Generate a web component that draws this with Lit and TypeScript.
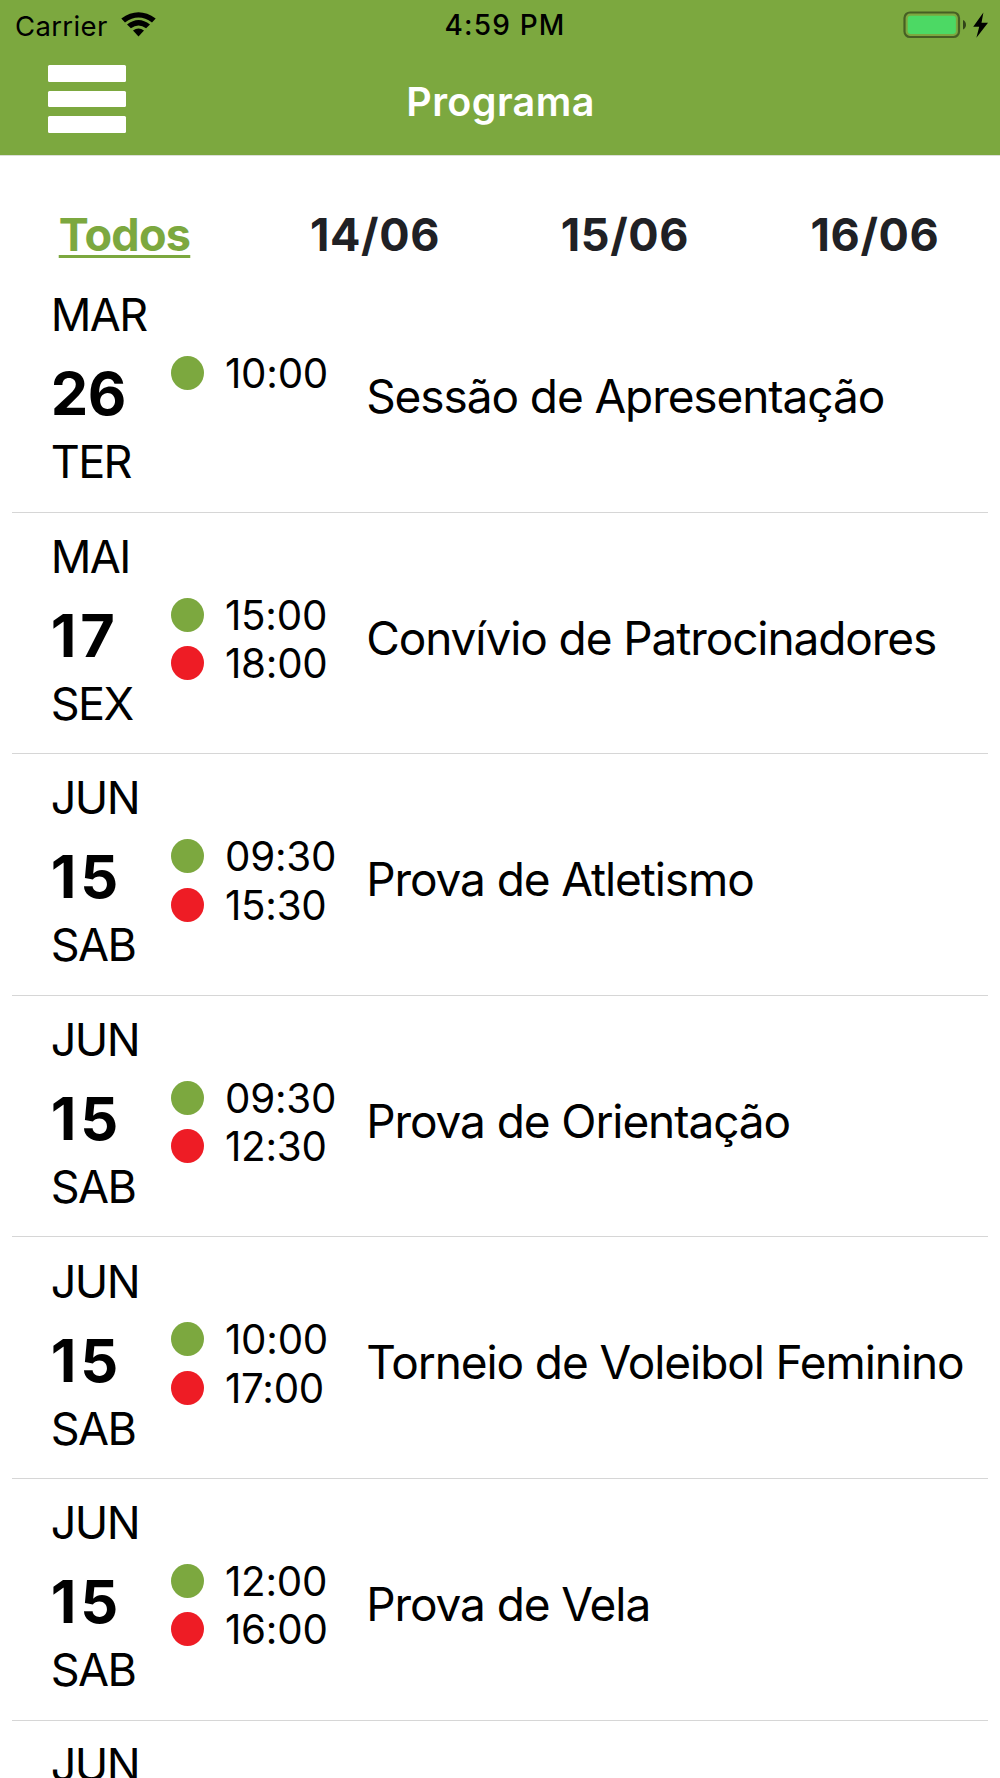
import { LitElement, html, css } from "lit";
import { customElement, property, state } from "lit/decorators.js";
import { classMap } from "lit/directives/class-map.js";

interface ProgramEvent {
  month: string;
  day: string;
  weekday: string;
  start: string;
  end?: string;
  title: string;
}

const TABS = ["Todos", "14/06", "15/06", "16/06"];

const EVENTS: ProgramEvent[] = [
  { month: "MAR", day: "26", weekday: "TER", start: "10:00", title: "Sessão de Apresentação" },
  { month: "MAI", day: "17", weekday: "SEX", start: "15:00", end: "18:00", title: "Convívio de Patrocinadores" },
  { month: "JUN", day: "15", weekday: "SAB", start: "09:30", end: "15:30", title: "Prova de Atletismo" },
  { month: "JUN", day: "15", weekday: "SAB", start: "09:30", end: "12:30", title: "Prova de Orientação" },
  { month: "JUN", day: "15", weekday: "SAB", start: "10:00", end: "17:00", title: "Torneio de Voleibol Feminino" },
  { month: "JUN", day: "15", weekday: "SAB", start: "12:00", end: "16:00", title: "Prova de Vela" },
  { month: "JUN", day: "", weekday: "", start: "", title: "" },
];

@customElement("status-bar")
class StatusBar extends LitElement {
  static styles = css`
    :host {
      display: grid;
      grid-template-columns: 1fr auto 1fr;
      align-items: center;
      height: 51px;
      padding: 0 12px 0 15px;
      box-sizing: border-box;
      color: #000;
    }
    .side { display: flex; align-items: center; height: 51px; }
    .end { justify-content: flex-end; }
    .carrier { font-size: 27.5px; letter-spacing: 0.35px; margin-right: 13px; }
    .clock { font-size: 28px; font-weight: 500; letter-spacing: 1.2px; padding-left: 7px; margin-bottom: 1px; }
    svg { display: block; }
    .wifi { margin-bottom: 3px; }
    .battery { margin-bottom: 2px; }
  `;
  render() {
    return html`
      <div class="side">
        <span class="carrier">Carrier</span>
        <svg class="wifi" width="35" height="25" viewBox="0 0 35 25">
          <path d="M0.3 6.6 Q17.5 -6.2 34.7 6.6 L31 10.4 Q17.5 0.6 4 10.4 Z" />
          <path d="M6 12.4 Q17.5 3.4 29 12.4 L25.1 16.3 Q17.5 10.6 9.9 16.3 Z" />
          <path d="M12 18.6 Q17.5 14.6 23 18.6 L17.5 24.5 Z" />
        </svg>
      </div>
      <span class="clock">4:59 PM</span>
      <div class="side end">
        <svg class="battery" width="86" height="28" viewBox="0 0 86 28">
          <rect x="2.5" y="1.5" width="54.5" height="24.5" rx="5.5" fill="none" stroke="#000" stroke-opacity="0.43" stroke-width="2.2" />
          <rect x="5.7" y="4.7" width="48.2" height="18.2" rx="3" fill="#4cd964" />
          <path d="M61 9 Q64 10.5 64 13.8 Q64 17 61 18.6 Z" fill-opacity="0.6" />
          <path d="M81.4 1.6 L71.2 15.7 H77.2 L74.4 26.8 L86 11.8 H79.5 Z" />
        </svg>
      </div>
    `;
  }
}

@customElement("event-row")
class EventRow extends LitElement {
  @property({ attribute: false }) event!: ProgramEvent;

  static styles = css`
    :host {
      display: grid;
      grid-template-columns: 120px 195.5px 1fr;
      height: 241.6px;
      margin: 0 12px;
      padding-left: 38.7px;
      box-sizing: border-box;
      border-bottom: 1px solid #d6d6d6;
      white-space: nowrap;
    }
    .date { padding-top: 8.2px; }
    .label { font-size: 45px; letter-spacing: -1.6px; line-height: 72px; }
    .day { font-size: 59.5px; font-weight: 700; line-height: 84px; letter-spacing: -0.3px; }
    .teen { letter-spacing: 3.9px; }
    .weekday { line-height: 54px; }
    .times { padding-top: 77.8px; }
    .time { display: flex; align-items: center; height: 48.4px; font-size: 40.3px; letter-spacing: -0.25px; }
    .value { padding-top: 1px; }
    .dot { width: 33px; height: 34px; border-radius: 50%; background: #7ca83f; margin-right: 21.3px; }
    .close { background: #ee1c25; }
    .title { font-size: 46px; letter-spacing: -1.09px; line-height: 250.4px; height: 240px; }
  `;
  render() {
    const e = this.event;
    return html`
      <div class="date">
        <div class="label">${e.month}</div>
        <div class=${classMap({ day: true, teen: e.day.startsWith("1") })}>${e.day}</div>
        <div class="label weekday">${e.weekday}</div>
      </div>
      <div class="times">
        ${e.start ? html`<div class="time"><i class="dot"></i><span class="value">${e.start}</span></div>` : ""}
        ${e.end ? html`<div class="time"><i class="dot close"></i><span class="value">${e.end}</span></div>` : ""}
      </div>
      <div class="title">${e.title}</div>
    `;
  }
}

@customElement("app-root")
class AppRoot extends LitElement {
  @state() private tab = 0;

  static styles = css`
    :host {
      display: block;
      height: 1778px;
      overflow: hidden;
      background: #fff;
      color: #000;
      font-family: Inter, "Liberation Sans", sans-serif;
    }
    .top { height: 155px; background: #7ca83f; border-bottom: 1px solid #dcdfd8; box-sizing: content-box; }
    .nav { display: grid; grid-template-columns: 1fr auto 1fr; align-items: center; height: 101px; padding: 0 48px; }
    .menu { display: flex; flex-direction: column; justify-content: space-between; width: 78px; height: 68px; margin-bottom: 5px; }
    .bar { height: 16.6px; background: #fff; border-radius: 1.5px; }
    .heading { margin: 0; padding-left: 1px; font-size: 39.5px; font-weight: 600; letter-spacing: 0.4px; color: #fff; }
    .tabs { display: grid; grid-template-columns: repeat(4, 1fr); height: 115px; }
    .tab { font-size: 45px; font-weight: 700; line-height: 158px; height: 115px; text-align: center; letter-spacing: 0.65px; color: #202125; }
    .active {
      color: #7ca83f;
      letter-spacing: -0.75px;
      text-indent: -1px;
      text-decoration: underline;
      text-decoration-thickness: 3px;
      text-underline-offset: 4px;
      text-decoration-skip-ink: none;
    }
  `;
  render() {
    return html`
      <header class="top">
        <status-bar></status-bar>
        <div class="nav">
          <div class="menu"><i class="bar"></i><i class="bar"></i><i class="bar"></i></div>
          <h1 class="heading">Programa</h1>
        </div>
      </header>
      <nav class="tabs">
        ${TABS.map((t, i) => html`
          <div class=${classMap({ tab: true, active: i === this.tab })} @click=${() => (this.tab = i)}>${t}</div>
        `)}
      </nav>
      <main>${EVENTS.map((e) => html`<event-row .event=${e}></event-row>`)}</main>
    `;
  }
}
